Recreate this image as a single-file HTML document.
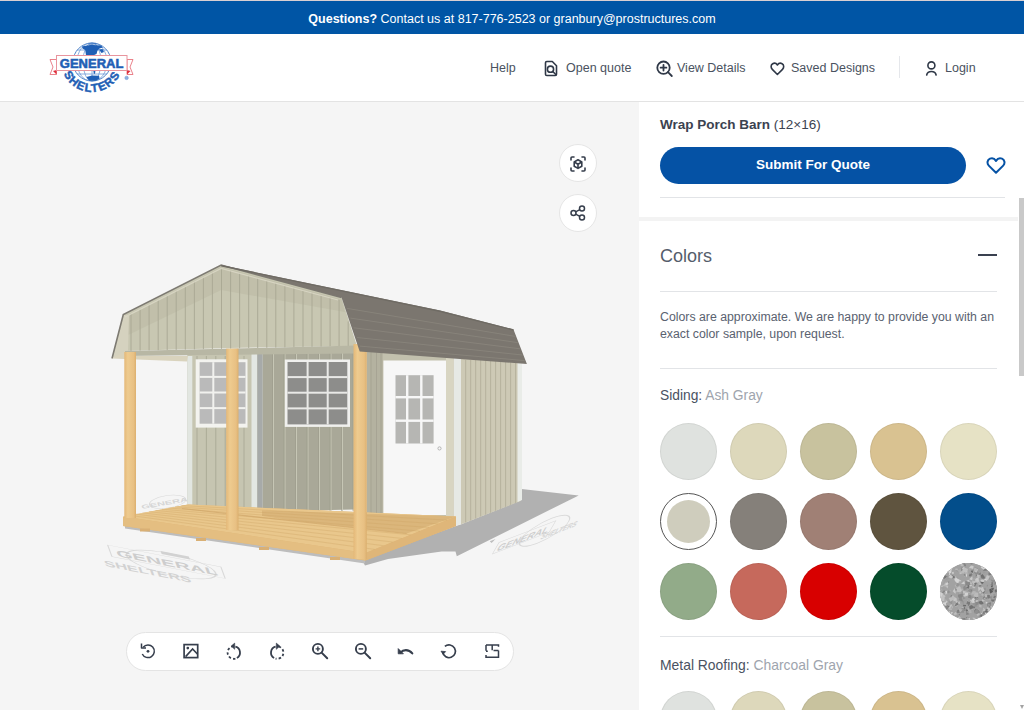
<!DOCTYPE html>
<html><head><meta charset="utf-8">
<style>
*{box-sizing:border-box;margin:0;padding:0}
html,body{width:1024px;height:710px;overflow:hidden;background:#fff;font-family:"Liberation Sans",sans-serif}
.top{position:absolute;left:0;top:0;width:1024px;height:34.5px;background:#0055a5;border-top:1px solid #d9cfd2;color:#fff;font-size:12.5px;text-align:center;line-height:36px}
.top b{font-weight:bold}
.hdr{position:absolute;z-index:2;left:0;top:34px;width:1024px;height:68px;background:#fff;border-bottom:1px solid #e3e3e3}
.nav{position:absolute;top:27px;font-size:12.5px;color:#4a5260;white-space:nowrap}
.viewer{position:absolute;left:0;top:101px;width:639px;height:609px;background:#f5f5f5}
.panel{position:absolute;left:639px;top:101px;width:385px;height:609px;background:#fff;overflow:hidden}
.t{position:absolute;white-space:nowrap}
.hr{position:absolute;height:1px;background:#e2e4e7}
.sw{position:absolute;width:57px;height:57px;border-radius:50%;box-shadow:0 0 0 1px rgba(0,0,0,0.06) inset}
.rb{position:absolute;width:38px;height:38px;border-radius:50%;background:#fff;border:1px solid #e6e6e6}
.bar{position:absolute;left:126px;top:530.5px;width:388px;height:39px;border-radius:19.5px;background:#fff;border:1px solid #e4e4e4}
svg.ic{position:absolute}
</style></head><body>
<div class="top"><b>Questions?</b> Contact us at 817-776-2523 or granbury@prostructures.com</div>
<div class="hdr">
<svg style="position:absolute;left:48px;top:6px" width="90" height="60" viewBox="48 40 90 60">
 <defs><clipPath id="gc"><circle cx="92" cy="62" r="19.5"/></clipPath></defs>
 <circle cx="92" cy="62" r="19" fill="#fff" stroke="#3d76c2" stroke-width="0.9"/>
 <g clip-path="url(#gc)" stroke="#6f9bd6" stroke-width="0.8" fill="none">
  <ellipse cx="92" cy="62" rx="9" ry="19.5"/><ellipse cx="92" cy="62" rx="15" ry="19.5"/>
  <line x1="72" y1="50" x2="112" y2="50"/><line x1="72" y1="74" x2="112" y2="74"/><line x1="92" y1="42" x2="92" y2="82"/>
 </g>
 <g clip-path="url(#gc)" fill="#1f5fb5">
  <path d="M82 46.5 C86 45 94 44.5 101 45.5 L103 47.5 L99.5 48.5 L97.5 50.5 L96.5 54 L93 55.5 L86 55.6 L85.2 50 L82.5 48.5 Z"/>
  <path d="M99 49.5 L102.5 49 L104 52 L101.5 53 Z"/><path d="M88 43.5 L96 43 L97 44.5 L89 45 Z" fill-opacity="0.6"/>
  <path d="M86.5 77 L92 75.6 L99 75.8 L99.5 78.5 L96 80.8 L89 80.8 Z"/><path d="M93.3 70.2 L95.5 70.2 L95 73.8 L93.8 73.8Z"/>
 </g>
 <path d="M50 59.5 L56.5 59.5 L56.5 74.5 L50 74.5 L53 67 Z" fill="#fff" stroke="#e8747e" stroke-width="0.9"/>
 <path d="M133 59.5 L127 59.5 L127 74.5 L133 74.5 L130 67 Z" fill="#fff" stroke="#e8747e" stroke-width="0.9"/>
 <path d="M53 71 L56.5 74.5 L56.5 70Z" fill="#e0303e"/><path d="M130.5 71 L127 74.5 L127 70Z" fill="#e0303e"/>
 <rect x="56.5" y="55.5" width="70.5" height="15" fill="#fff" stroke="#e8959e" stroke-width="1"/>
 <text x="91.6" y="67.8" text-anchor="middle" font-family="Liberation Sans" font-weight="bold" font-size="12.3" fill="#1f5fb5" stroke="#1f5fb5" stroke-width="0.55" textLength="63.5" lengthAdjust="spacingAndGlyphs">GENERAL</text>
 <path id="arc" d="M61 61 A31 31 0 0 0 123 61" fill="none"/>
 <text font-family="Liberation Sans" font-weight="bold" font-size="11.5" fill="#1f5fb5" stroke="#1f5fb5" stroke-width="0.5" letter-spacing="1.3"><textPath href="#arc" startOffset="50%" text-anchor="middle">SHELTERS</textPath></text>
 <circle cx="126.6" cy="77.9" r="1.7" fill="#8fb1e0" stroke="#6f9bd6" stroke-width="0.6"/>
</svg>
<div class="nav" style="left:490px">Help</div>
<svg class="ic" style="left:543px;top:26px" width="16" height="17" viewBox="0 0 16 17" fill="none" stroke="#2f3847" stroke-width="1.6" stroke-linejoin="round">
 <path d="M3.8 1.5 H9.3 L13.5 5.7 V14.2 Q13.5 15.5 12.2 15.5 H3.8 Q2.5 15.5 2.5 14.2 V2.8 Q2.5 1.5 3.8 1.5Z"/>
 <circle cx="7.5" cy="9.2" r="3.1"/><path d="M9.8 11.5 L13 14.7" stroke-linecap="round"/>
</svg>
<div class="nav" style="left:566px">Open quote</div>
<svg class="ic" style="left:655px;top:25px" width="20" height="20" viewBox="0 0 20 20" fill="none" stroke="#2f3847" stroke-width="1.8" stroke-linecap="round">
 <circle cx="8.5" cy="8.7" r="6.2"/><path d="M13 13.2 L16.8 17"/><path d="M8.5 5.8 V11.6 M5.6 8.7 H11.4"/>
</svg>
<div class="nav" style="left:677px">View Details</div>
<svg class="ic" style="left:769px;top:26px" width="17" height="17" viewBox="0 0 17 16" fill="none" stroke="#2f3847" stroke-width="1.6" stroke-linejoin="round">
 <path d="M8.4 14 L3.3 8.9 C1.6 7.2 1.7 4.3 3.7 3.2 C5.4 2.3 7.3 2.9 8.4 4.5 C9.5 2.9 11.4 2.3 13.1 3.2 C15.1 4.3 15.2 7.2 13.5 8.9 Z"/>
</svg>
<div class="nav" style="left:791px">Saved Designs</div>
<div style="position:absolute;left:899px;top:22px;width:1px;height:22px;background:#e5e7eb"></div>
<svg class="ic" style="left:924px;top:26px" width="15" height="17" viewBox="0 0 15 17" fill="none" stroke="#2f3847" stroke-width="1.6" stroke-linecap="round">
 <circle cx="7.4" cy="5.4" r="3.5"/><path d="M2.7 15 C3.2 12.6 5 11.5 7.4 11.5 C9.8 11.5 11.6 12.6 12.1 15"/>
</svg>
<div class="nav" style="left:945px">Login</div>
</div>
<div class="viewer">
<div class="rb" style="left:559px;top:43px"></div>
<svg class="ic" style="left:569px;top:54px" width="18" height="18" viewBox="0 0 18 18" fill="none" stroke="#353d4b" stroke-width="1.6" stroke-linecap="round" stroke-linejoin="round">
 <path d="M2 5 V3 C2 2.4 2.4 2 3 2 H5 M13 2 H15 C15.6 2 16 2.4 16 3 V5 M16 13 V15 C16 15.6 15.6 16 15 16 H13 M5 16 H3 C2.4 16 2 15.6 2 15 V13"/>
 <path d="M9 4.8 L12.8 7 V11.2 L9 13.4 L5.2 11.2 V7 Z M5.2 7 L9 9.2 L12.8 7 M9 9.2 V13.4"/>
</svg>
<div class="rb" style="left:559px;top:93px"></div>
<svg class="ic" style="left:569px;top:103px" width="18" height="18" viewBox="0 0 18 18" fill="none" stroke="#363e4c" stroke-width="1.5">
 <circle cx="4.5" cy="9" r="2.5"/><circle cx="13" cy="4.5" r="2.5"/><circle cx="13" cy="13.5" r="2.5"/>
 <path d="M6.7 7.8 L10.8 5.7 M6.7 10.2 L10.8 12.3"/>
</svg>
<div class="bar"></div>
<svg class="ic" style="left:139.1px;top:540.8px" width="18" height="18" viewBox="0 0 18 18" fill="none" stroke="#363e4c" stroke-width="1.5"><path d="M4.17 5.25 A6.3 6.3 0 1 1 3.29 11.96"/><path d="M2.5 1.6 V5.9 H7" stroke-linejoin="round"/><circle cx="9" cy="9.3" r="1.4" fill="#363e4c" stroke="none"/></svg>
<svg class="ic" style="left:181.8px;top:540.8px" width="18" height="18" viewBox="0 0 18 18" fill="none" stroke="#363e4c" stroke-width="1.5"><rect x="2.1" y="2.6" width="13.6" height="13" stroke-width="1.7"/><path d="M3.6 14.6 L10.6 7 L15.6 12.2" stroke-width="1.6"/><circle cx="5.8" cy="6.1" r="1.35" fill="#363e4c" stroke="none"/></svg>
<svg class="ic" style="left:224.9px;top:540.8px" width="18" height="18" viewBox="0 0 18 18" fill="none" stroke="#363e4c" stroke-width="1.5"><path d="M10.40 4.61 A6.2 6.2 0 0 1 11.90 15.97" stroke-width="1.8"/><path d="M10.40 16.59 A6.2 6.2 0 0 1 7.20 4.61" stroke-width="1.8" stroke-dasharray="2.4 2.1"/><path d="M6.2 4.1 L9.7 1.1 L9.7 7.3 Z" fill="#363e4c" stroke-width="0.6" stroke-linejoin="round"/></svg>
<svg class="ic" style="left:267.5px;top:540.8px" width="18" height="18" viewBox="0 0 18 18" fill="none" stroke="#363e4c" stroke-width="1.5"><path d="M6.10 15.97 A6.2 6.2 0 0 1 7.60 4.61" stroke-width="1.8"/><path d="M10.80 4.61 A6.2 6.2 0 0 1 7.60 16.59" stroke-width="1.8" stroke-dasharray="2.4 2.1"/><path d="M11.8 4.1 L8.3 1.1 L8.3 7.3 Z" fill="#363e4c" stroke-width="0.6" stroke-linejoin="round"/></svg>
<svg class="ic" style="left:310.6px;top:540.8px" width="18" height="18" viewBox="0 0 18 18" fill="none" stroke="#363e4c" stroke-width="1.5"><circle cx="6.9" cy="6.9" r="5" stroke-width="1.9"/><path d="M10.6 10.6 L16.2 16.2" stroke-width="2" stroke-linecap="round"/><path d="M6.9 4.6 V9.2 M4.6 6.9 H9.2" stroke-width="1.4"/></svg>
<svg class="ic" style="left:353.7px;top:540.8px" width="18" height="18" viewBox="0 0 18 18" fill="none" stroke="#363e4c" stroke-width="1.5"><circle cx="6.9" cy="6.9" r="5" stroke-width="1.9"/><path d="M10.6 10.6 L16.2 16.2" stroke-width="2" stroke-linecap="round"/><path d="M4.6 6.9 H9.2" stroke-width="1.5"/></svg>
<svg class="ic" style="left:396.3px;top:540.8px" width="18" height="18" viewBox="0 0 18 18" fill="none" stroke="#363e4c" stroke-width="1.5"><path d="M4.5 10.6 C7 7.6 12.5 6.8 16.3 11.4" stroke-width="2.1" stroke-linecap="round"/><path d="M2.2 6.6 L2.2 11.8 L7.4 11.8 Z" fill="#363e4c" stroke-width="0.8" stroke-linejoin="round"/></svg>
<svg class="ic" style="left:439.8px;top:540.8px" width="18" height="18" viewBox="0 0 18 18" fill="none" stroke="#363e4c" stroke-width="1.5"><path d="M4.89 4.40 A6.4 6.4 0 1 1 2.70 10.41" stroke-width="1.7"/><path d="M1.0 9.2 L3.2 12.2 L5.6 9.6 Z" fill="#353d4b" stroke-width="0.8" stroke-linejoin="round"/></svg>
<svg class="ic" style="left:482.5px;top:540.8px" width="18" height="18" viewBox="0 0 18 18" fill="none" stroke="#363e4c" stroke-width="1.5"><path d="M3 3 H15.5 V4.8 M15.5 8.6 V15.2 H3 V13 M3 3 V8.8 M15.5 8.6 H10.5 M9.2 3 V8.2 M3 9.3 H4.8" stroke-linecap="butt"/></svg>
<!--BARN--><svg style="position:absolute;left:0;top:0" width="639" height="609" viewBox="0 101 639 609">
<defs><linearGradient id="postg" x1="0" x2="1" y1="0" y2="0"><stop offset="0" stop-color="#e4b878"/><stop offset="0.3" stop-color="#eecb8f"/><stop offset="0.8" stop-color="#e8c083"/><stop offset="1" stop-color="#dbaf6e"/></linearGradient></defs>
<g fill="none" stroke="#d9d9d9" stroke-width="1.6">
<g transform="matrix(1.011,0.196,0.1435,0.385,168,566)"><ellipse cx="4" cy="-6" rx="44" ry="30" /><path d="M-56 -26 H56 V4 H-56 Z" stroke-width="1.2"/><path d="M-2 -38 H26 V-30 H-2Z" fill="#d2d2d2" stroke="none"/><text x="0" y="0" text-anchor="middle" font-family="Liberation Sans" font-weight="bold" font-size="24" fill="#cdcdcd" stroke="none" textLength="100" lengthAdjust="spacingAndGlyphs">GENERAL</text><text x="-24" y="34" text-anchor="middle" font-family="Liberation Sans" font-weight="bold" font-size="22" fill="#d2d2d2" stroke="none" textLength="86" lengthAdjust="spacingAndGlyphs">SHELTERS</text></g>
<g transform="matrix(0.71,-0.272,-0.3,0.52,522,541)"><ellipse cx="30" cy="-4" rx="34" ry="24" /><path d="M-40 -18 H40 V4 H-40 Z" stroke-width="1.2"/><path d="M-58 -30 l8 0 l-3 6z" fill="#bdbdbd" stroke="none"/><text x="0" y="2" text-anchor="middle" font-family="Liberation Sans" font-weight="bold" font-size="19" fill="#cdcdcd" stroke="none" textLength="72" lengthAdjust="spacingAndGlyphs">GENERAL</text><text x="56" y="14" text-anchor="middle" font-family="Liberation Sans" font-weight="bold" font-size="16" fill="#d4d4d4" stroke="none" textLength="50" lengthAdjust="spacingAndGlyphs">SHELTERS</text></g>
<g transform="matrix(0.6,-0.1,0.1,0.3,168,503)"><ellipse cx="0" cy="-4" rx="30" ry="20"/><text x="0" y="5" text-anchor="middle" font-family="Liberation Sans" font-weight="bold" font-size="18" fill="#d6d6d6" stroke="none">GENERAL</text></g>
</g>
<polygon points="521.6,489.0 578.7,495.4 456.8,556.3 455.5,551.5 441.6,551.5 388.0,559.0 365.0,565.5 362.0,560.0 456.0,526.0 460.7,524.6 520.6,500.5" fill="#b1b1b1" />
<polygon points="125.0,525.5 365.0,560.0 365.0,563.5 125.0,528.5" fill="#bdbdbd" />
<polygon points="460.7,358.0 520.6,362.0 520.6,501.0 460.7,524.6" fill="#cdc9b5" />
<line x1="465.7" y1="360" x2="465.7" y2="522.6" stroke="#b3af9a" stroke-width="0.9"/>
<line x1="470.7" y1="360" x2="470.7" y2="520.7" stroke="#b3af9a" stroke-width="0.9"/>
<line x1="475.7" y1="360" x2="475.7" y2="518.7" stroke="#b3af9a" stroke-width="0.9"/>
<line x1="480.7" y1="360" x2="480.7" y2="516.7" stroke="#b3af9a" stroke-width="0.9"/>
<line x1="485.7" y1="360" x2="485.7" y2="514.8" stroke="#b3af9a" stroke-width="0.9"/>
<line x1="490.6" y1="360" x2="490.6" y2="512.8" stroke="#b3af9a" stroke-width="0.9"/>
<line x1="495.6" y1="360" x2="495.6" y2="510.8" stroke="#b3af9a" stroke-width="0.9"/>
<line x1="500.6" y1="360" x2="500.6" y2="508.9" stroke="#b3af9a" stroke-width="0.9"/>
<line x1="505.6" y1="360" x2="505.6" y2="506.9" stroke="#b3af9a" stroke-width="0.9"/>
<line x1="510.6" y1="360" x2="510.6" y2="504.9" stroke="#b3af9a" stroke-width="0.9"/>
<line x1="515.6" y1="360" x2="515.6" y2="503.0" stroke="#b3af9a" stroke-width="0.9"/>
<polygon points="517.5,362.0 522.0,362.0 522.0,500.0 517.5,502.0" fill="#e9ece8" />
<polygon points="453.6,356.0 460.7,356.0 460.7,524.6 453.6,526.0" fill="#e6e9e5" />
<polygon points="366.8,344.0 453.6,350.0 453.6,526.0 366.8,525.0" fill="#c2c0ad" />
<polygon points="366.8,344.0 382.8,345.0 382.8,525.0 366.8,525.0" fill="#b4b2a0" />
<line x1="371" y1="350" x2="371" y2="525" stroke="#a3a190" stroke-width="0.8"/>
<line x1="376.5" y1="350" x2="376.5" y2="525" stroke="#a3a190" stroke-width="0.8"/>
<line x1="381" y1="350" x2="381" y2="525" stroke="#a3a190" stroke-width="0.8"/>
<polygon points="446.0,350.0 453.6,350.0 453.6,526.0 446.0,526.0" fill="#d8d5c2" />
<polygon points="383.4,360.5 446.0,360.5 446.0,515.0 383.4,515.0" fill="#f7f7f7" />
<rect x="395.5" y="375.2" width="38.1" height="68.3" fill="#b6b6b3"/>
<rect x="406.0" y="375.2" width="2.4" height="68.3" fill="#f7f7f7"/>
<rect x="420.1" y="375.2" width="2.4" height="68.3" fill="#f7f7f7"/>
<rect x="395.5" y="396.0" width="38.1" height="2.4" fill="#f7f7f7"/>
<rect x="395.5" y="419.5" width="38.1" height="2.4" fill="#f7f7f7"/>
<circle cx="439.5" cy="448.4" r="1.6" fill="none" stroke="#a6a6a6" stroke-width="0.8"/>
<polygon points="262.6,352.0 354.0,352.0 354.0,509.6 262.6,511.4" fill="#a9a898" />
<line x1="273.5" y1="352" x2="273.5" y2="511" stroke="#cac9b8" stroke-width="0.9"/>
<line x1="272.5" y1="352" x2="272.5" y2="511" stroke="#9c9b8b" stroke-width="0.6"/>
<line x1="285.0" y1="352" x2="285.0" y2="511" stroke="#cac9b8" stroke-width="0.9"/>
<line x1="284.0" y1="352" x2="284.0" y2="511" stroke="#9c9b8b" stroke-width="0.6"/>
<line x1="296.5" y1="352" x2="296.5" y2="511" stroke="#cac9b8" stroke-width="0.9"/>
<line x1="295.5" y1="352" x2="295.5" y2="511" stroke="#9c9b8b" stroke-width="0.6"/>
<line x1="308.0" y1="352" x2="308.0" y2="511" stroke="#cac9b8" stroke-width="0.9"/>
<line x1="307.0" y1="352" x2="307.0" y2="511" stroke="#9c9b8b" stroke-width="0.6"/>
<line x1="319.5" y1="352" x2="319.5" y2="511" stroke="#cac9b8" stroke-width="0.9"/>
<line x1="318.5" y1="352" x2="318.5" y2="511" stroke="#9c9b8b" stroke-width="0.6"/>
<line x1="331.0" y1="352" x2="331.0" y2="511" stroke="#cac9b8" stroke-width="0.9"/>
<line x1="330.0" y1="352" x2="330.0" y2="511" stroke="#9c9b8b" stroke-width="0.6"/>
<line x1="342.5" y1="352" x2="342.5" y2="511" stroke="#cac9b8" stroke-width="0.9"/>
<line x1="341.5" y1="352" x2="341.5" y2="511" stroke="#9c9b8b" stroke-width="0.6"/>
<line x1="354.0" y1="352" x2="354.0" y2="511" stroke="#cac9b8" stroke-width="0.9"/>
<line x1="353.0" y1="352" x2="353.0" y2="511" stroke="#9c9b8b" stroke-width="0.6"/>
<rect x="284.8" y="359.5" width="65.2" height="67.4" fill="#f0f0ee"/>
<rect x="287.5" y="362" width="59.8" height="62.4" fill="#8d8d8b"/>
<rect x="306.6" y="362" width="2" height="62.4" fill="#e9e9e7"/>
<rect x="326.7" y="362" width="2" height="62.4" fill="#e9e9e7"/>
<rect x="287.5" y="376.1" width="59.8" height="2" fill="#e9e9e7"/>
<rect x="287.5" y="391.7" width="59.8" height="2" fill="#e9e9e7"/>
<rect x="287.5" y="407.4" width="59.8" height="2" fill="#e9e9e7"/>
<polygon points="187.3,354.0 262.6,352.0 262.6,511.4 187.3,504.4" fill="#c6c5b1" />
<line x1="197.0" y1="356" x2="197.0" y2="505.3" stroke="#a9a895" stroke-width="0.9"/>
<line x1="206.4" y1="356" x2="206.4" y2="506.2" stroke="#a9a895" stroke-width="0.9"/>
<line x1="215.8" y1="356" x2="215.8" y2="507.1" stroke="#a9a895" stroke-width="0.9"/>
<line x1="225.2" y1="356" x2="225.2" y2="507.9" stroke="#a9a895" stroke-width="0.9"/>
<line x1="234.6" y1="356" x2="234.6" y2="508.8" stroke="#a9a895" stroke-width="0.9"/>
<line x1="244.0" y1="356" x2="244.0" y2="509.7" stroke="#a9a895" stroke-width="0.9"/>
<line x1="253.4" y1="356" x2="253.4" y2="510.5" stroke="#a9a895" stroke-width="0.9"/>
<polygon points="187.3,356.0 192.3,356.0 192.3,505.0 187.3,504.4" fill="#e2e6e1" />
<polygon points="251.5,353.0 257.3,353.0 257.3,511.0 251.5,511.0" fill="#e3e7e3" />
<polygon points="257.3,353.0 262.6,353.0 262.6,511.4 257.3,511.0" fill="#a7aaa9" />
<rect x="195.7" y="359.3" width="51.8" height="68.3" fill="#f3f3ef"/>
<rect x="199.6" y="362.2" width="45.9" height="61.5" fill="#bababa"/>
<rect x="212.3" y="362.2" width="2" height="61.5" fill="#f1f1ee"/>
<rect x="227.9" y="362.2" width="2" height="61.5" fill="#f1f1ee"/>
<rect x="199.6" y="375.9" width="45.9" height="2" fill="#f1f1ee"/>
<rect x="199.6" y="391.5" width="45.9" height="2" fill="#f1f1ee"/>
<rect x="199.6" y="407.1" width="45.9" height="2" fill="#f1f1ee"/>
<polygon points="123.0,517.0 188.0,504.4 456.0,516.5 456.0,526.0 365.5,560.5 123.0,526.0" fill="#dfb679" />
<polygon points="123.0,516.5 188.0,504.4 456.0,516.5 365.5,553.0" fill="#e9c78c" />
<polygon points="262.0,510.5 456.0,516.5 406.6,533.5 307.0,522.5 262.0,516.0" fill="#dbb67b" />
<polyline points="182,508.5 307,522.5 406.6,533.5" fill="none" stroke="#d3ab6f" stroke-width="1.2" opacity="0.8"/>
<polygon points="123.0,516.5 365.5,553.0 365.5,560.5 123.0,526.0" fill="#e4be81" />
<polygon points="365.5,553.0 456.0,516.5 456.0,526.0 365.5,560.5" fill="#dfb679" />
<line x1="129.5" y1="515.3" x2="374.6" y2="549.4" stroke="#cfa565" stroke-width="0.6" opacity="0.6"/>
<line x1="136.0" y1="514.1" x2="383.6" y2="545.7" stroke="#cfa565" stroke-width="0.6" opacity="0.6"/>
<line x1="142.5" y1="512.9" x2="392.6" y2="542.0" stroke="#cfa565" stroke-width="0.6" opacity="0.6"/>
<line x1="149.0" y1="511.7" x2="401.7" y2="538.4" stroke="#cfa565" stroke-width="0.6" opacity="0.6"/>
<line x1="155.5" y1="510.4" x2="410.8" y2="534.8" stroke="#cfa565" stroke-width="0.6" opacity="0.6"/>
<line x1="162.0" y1="509.2" x2="419.8" y2="531.1" stroke="#cfa565" stroke-width="0.6" opacity="0.6"/>
<line x1="168.5" y1="508.0" x2="428.9" y2="527.5" stroke="#cfa565" stroke-width="0.6" opacity="0.6"/>
<line x1="175.0" y1="506.8" x2="437.9" y2="523.8" stroke="#cfa565" stroke-width="0.6" opacity="0.6"/>
<line x1="181.5" y1="505.6" x2="446.9" y2="520.1" stroke="#cfa565" stroke-width="0.6" opacity="0.6"/>
<rect x="140" y="528.5" width="10" height="3" fill="#d9b075"/>
<rect x="196" y="538" width="10" height="3" fill="#d9b075"/>
<rect x="259" y="547" width="10" height="3" fill="#d9b075"/>
<rect x="330" y="557" width="10" height="3" fill="#d9b075"/>
<polygon points="221.2,265.1 341.5,297.6 357.0,346.0 230.0,348.0 125.0,351.0 112.0,358.5 123.3,314.6" fill="#c8c7b2" />
<polygon points="221.2,267.0 341.5,299.5 345.0,312.0 221.2,290.0 124.0,337.0 124.5,318.0" fill="#bdbca7" opacity="0.7"/>
<line x1="131.0" y1="313.7" x2="131.0" y2="350.9" stroke="#a8a793" stroke-width="0.9"/>
<line x1="140.1" y1="309.1" x2="140.1" y2="350.7" stroke="#a8a793" stroke-width="0.9"/>
<line x1="149.1" y1="304.6" x2="149.1" y2="350.5" stroke="#a8a793" stroke-width="0.9"/>
<line x1="158.2" y1="300.0" x2="158.2" y2="350.3" stroke="#a8a793" stroke-width="0.9"/>
<line x1="167.2" y1="295.4" x2="167.2" y2="350.1" stroke="#a8a793" stroke-width="0.9"/>
<line x1="176.2" y1="290.8" x2="176.2" y2="349.9" stroke="#a8a793" stroke-width="0.9"/>
<line x1="185.3" y1="286.3" x2="185.3" y2="349.7" stroke="#a8a793" stroke-width="0.9"/>
<line x1="194.4" y1="281.7" x2="194.4" y2="349.5" stroke="#a8a793" stroke-width="0.9"/>
<line x1="203.4" y1="277.1" x2="203.4" y2="349.3" stroke="#a8a793" stroke-width="0.9"/>
<line x1="212.4" y1="272.5" x2="212.4" y2="349.1" stroke="#a8a793" stroke-width="0.9"/>
<line x1="221.5" y1="268.2" x2="221.5" y2="348.9" stroke="#a8a793" stroke-width="0.9"/>
<line x1="230.6" y1="270.6" x2="230.6" y2="348.7" stroke="#a8a793" stroke-width="0.9"/>
<line x1="239.6" y1="273.1" x2="239.6" y2="348.5" stroke="#a8a793" stroke-width="0.9"/>
<line x1="248.7" y1="275.5" x2="248.7" y2="348.3" stroke="#a8a793" stroke-width="0.9"/>
<line x1="257.7" y1="278.0" x2="257.7" y2="348.1" stroke="#a8a793" stroke-width="0.9"/>
<line x1="266.8" y1="280.4" x2="266.8" y2="347.9" stroke="#a8a793" stroke-width="0.9"/>
<line x1="275.8" y1="282.9" x2="275.8" y2="347.8" stroke="#a8a793" stroke-width="0.9"/>
<line x1="284.9" y1="285.3" x2="284.9" y2="347.6" stroke="#a8a793" stroke-width="0.9"/>
<line x1="293.9" y1="287.7" x2="293.9" y2="347.4" stroke="#a8a793" stroke-width="0.9"/>
<line x1="303.0" y1="290.2" x2="303.0" y2="347.2" stroke="#a8a793" stroke-width="0.9"/>
<line x1="312.0" y1="292.6" x2="312.0" y2="347.0" stroke="#a8a793" stroke-width="0.9"/>
<line x1="321.1" y1="295.1" x2="321.1" y2="346.8" stroke="#a8a793" stroke-width="0.9"/>
<line x1="330.1" y1="297.5" x2="330.1" y2="346.6" stroke="#a8a793" stroke-width="0.9"/>
<line x1="339.1" y1="300.0" x2="339.1" y2="346.4" stroke="#a8a793" stroke-width="0.9"/>
<line x1="348.2" y1="321.5" x2="348.2" y2="346.2" stroke="#a8a793" stroke-width="0.9"/>
<polygon points="123.3,314.6 129.0,316.0 128.0,352.0 112.0,358.5" fill="#d5d2bf" />
<polyline points="112,358.5 123.3,314.6 221.2,265.1 341.5,297.6" fill="none" stroke="#7d7a72" stroke-width="1.6"/>
<polyline points="125,317 221.2,268.5 338,300" fill="none" stroke="#dcdac8" stroke-width="1.2" opacity="0.8"/>
<polygon points="125.0,351.0 357.0,345.5 357.0,353.5 125.0,356.0" fill="#b8b7a4" />
<polygon points="112.0,358.5 125.0,351.0 125.0,356.0 188.0,356.0 187.0,361.5" fill="#d9d3bd" />
<rect x="124.3" y="352" width="11.700000000000003" height="166" fill="url(#postg)"/>
<rect x="226.2" y="348.6" width="12.300000000000011" height="181.39999999999998" fill="url(#postg)"/>
<rect x="353.5" y="344" width="13.300000000000011" height="215" fill="url(#postg)"/>
<polygon points="221.2,265.1 440.0,310.5 513.5,329.5 526.9,364.0 359.7,351.5 341.5,297.6" fill="#7b766f" />
<polyline points="221.2,265.8 440,311.2 513.5,330" fill="none" stroke="#6f6b64" stroke-width="1.4"/>
<line x1="347.1" y1="308.4" x2="515.2" y2="336.4" stroke="#89847c" stroke-width="0.9"/>
<line x1="350.4" y1="318.1" x2="517.6" y2="342.6" stroke="#89847c" stroke-width="0.9"/>
<line x1="353.7" y1="327.8" x2="520.0" y2="348.8" stroke="#89847c" stroke-width="0.9"/>
<line x1="357.0" y1="337.5" x2="522.4" y2="355.0" stroke="#89847c" stroke-width="0.9"/>
<line x1="359.9" y1="346.1" x2="524.6" y2="360.6" stroke="#89847c" stroke-width="0.9"/>
</svg><!--/BARN-->
</div>
<div class="panel">
<div class="t" style="left:21px;top:16px;font-size:13.5px;color:#3b4250"><b>Wrap Porch Barn</b> (12×16)</div>
<div style="position:absolute;left:21px;top:46px;width:306px;height:37px;border-radius:19px;background:#0552a5"></div>
<div class="t" style="left:21px;top:45px;width:306px;text-align:center;line-height:37px;font-size:13.5px;font-weight:bold;color:#fff">Submit For Quote</div>
<svg class="ic" style="left:347px;top:55px" width="20" height="19" viewBox="0 0 20 19" fill="none" stroke="#0552a5" stroke-width="2" stroke-linejoin="round">
 <path d="M10 16.8 L2.8 9.6 C0.7 7.5 1.2 3.8 4 2.6 C6.4 1.6 8.7 2.8 10 4.9 C11.3 2.8 13.6 1.6 16 2.6 C18.8 3.8 19.3 7.5 17.2 9.6 Z"/>
</svg>
<div class="hr" style="left:21px;top:96px;width:345px"></div>
<div style="position:absolute;left:0;top:116px;width:379px;height:4px;background:#f3f3f3"></div>
<div style="position:absolute;left:380px;top:97px;width:5px;height:178px;background:#c9c9c9"></div>
<div class="t" style="left:21px;top:145px;font-size:18px;color:#555d6b">Colors</div>
<div style="position:absolute;left:339px;top:153px;width:19px;height:2px;background:#3a4150"></div>
<div class="hr" style="left:21px;top:190px;width:337px"></div>
<div class="t" style="left:21px;top:208px;font-size:12.3px;line-height:17px;color:#5a6270">Colors are approximate. We are happy to provide you with an<br>exact color sample, upon request.</div>
<div class="hr" style="left:21px;top:267px;width:337px"></div>
<div class="t" style="left:21px;top:287px;font-size:13.8px;color:#4a5262">Siding: <span style="color:#9ea4ad">Ash Gray</span></div>
<div class="sw" style="left:21px;top:322px;background:#dfe2df"></div>
<div class="sw" style="left:91px;top:322px;background:#ddd8bb"></div>
<div class="sw" style="left:161px;top:322px;background:#c8c29e"></div>
<div class="sw" style="left:231px;top:322px;background:#d9c291"></div>
<div class="sw" style="left:301px;top:322px;background:#e6e2c5"></div>
<div style="position:absolute;left:21px;top:392px;width:57px;height:57px;border-radius:50%;border:1px solid #555"><div style="position:absolute;left:6px;top:6px;width:43px;height:43px;border-radius:50%;background:#cfcdbd"></div></div>
<div class="sw" style="left:91px;top:392px;background:#85807a"></div>
<div class="sw" style="left:161px;top:392px;background:#a08075"></div>
<div class="sw" style="left:231px;top:392px;background:#5f543f"></div>
<div class="sw" style="left:301px;top:392px;background:#034e8b"></div>
<div class="sw" style="left:21px;top:462px;background:#92ab89"></div>
<div class="sw" style="left:91px;top:462px;background:#c6695c"></div>
<div class="sw" style="left:161px;top:462px;background:#d80000"></div>
<div class="sw" style="left:231px;top:462px;background:#054c2b"></div>
<div class="sw" style="left:301px;top:462px;background:#a9a9a9;overflow:hidden"><svg width="57" height="57" viewBox="0 0 57 57" style="position:absolute;left:0;top:0"><rect width="57" height="57" fill="#a2a2a2"/><polygon points="18.0,5.0 18.2,8.9 15.9,8.0" fill="rgb(155,155,155)"/><polygon points="0.5,30.0 3.0,29.3 4.8,31.9 2.2,34.4 -0.0,34.1" fill="rgb(186,186,186)"/><polygon points="33.8,9.5 32.6,10.6 31.6,9.9 32.3,8.6 34.0,8.6" fill="rgb(199,199,199)"/><polygon points="29.8,18.2 28.5,20.3 27.3,19.8 26.5,17.7 28.7,16.8" fill="rgb(202,202,202)"/><polygon points="29.5,46.1 28.5,47.9 27.2,45.5" fill="rgb(204,204,204)"/><polygon points="21.0,56.1 19.0,56.7 17.1,55.3 18.3,54.0 21.0,54.4" fill="rgb(197,197,197)"/><polygon points="24.9,21.2 21.0,20.7 24.3,18.0" fill="rgb(206,206,206)"/><polygon points="23.0,31.1 22.7,33.9 19.3,35.8 17.8,32.9 19.0,30.6" fill="rgb(135,135,135)"/><polygon points="9.4,59.2 8.7,57.1 10.9,58.0" fill="rgb(118,118,118)"/><polygon points="38.1,58.7 35.3,57.8 35.3,55.6 37.7,54.9" fill="rgb(149,149,149)"/><polygon points="8.8,56.3 11.2,54.1 11.9,55.8 11.4,57.0 9.3,57.3" fill="rgb(194,194,194)"/><polygon points="48.7,56.4 48.8,59.9 46.0,58.8" fill="rgb(122,122,122)"/><polygon points="41.8,56.8 41.1,57.6 39.4,57.5 38.4,55.0 41.1,54.8" fill="rgb(185,185,185)"/><polygon points="2.9,22.7 6.0,19.1 5.9,23.7" fill="rgb(185,185,185)"/><polygon points="8.5,58.3 8.6,59.8 7.2,59.5 6.8,58.5 6.8,57.4" fill="rgb(213,213,213)"/><polygon points="57.4,24.3 53.2,25.8 54.0,21.6" fill="rgb(157,157,157)"/><polygon points="40.1,48.7 36.8,49.3 36.2,47.1 37.8,46.4 39.8,47.2" fill="rgb(213,213,213)"/><polygon points="32.7,45.9 32.2,47.0 30.6,46.8 31.0,45.2 33.0,45.2" fill="rgb(194,194,194)"/><polygon points="28.9,44.8 31.0,47.3 26.9,48.3" fill="rgb(176,176,176)"/><polygon points="25.4,3.4 23.3,1.5 26.0,1.6" fill="rgb(121,121,121)"/><polygon points="45.5,4.1 42.6,6.1 42.2,2.2" fill="rgb(125,125,125)"/><polygon points="17.3,27.8 15.7,25.5 20.6,23.8 20.5,26.3" fill="rgb(199,199,199)"/><polygon points="44.5,46.2 46.4,49.1 44.2,49.8 42.3,50.1 42.7,46.9" fill="rgb(190,190,190)"/><polygon points="2.0,50.7 3.7,49.4 4.2,50.8" fill="rgb(157,157,157)"/><polygon points="-0.5,10.4 1.5,9.0 3.0,11.2 1.3,11.4" fill="rgb(192,192,192)"/><polygon points="25.6,55.7 26.0,54.2 28.0,53.7 28.5,55.1 26.9,56.4" fill="rgb(130,130,130)"/><polygon points="1.2,38.1 -3.8,36.8 -2.5,34.6 0.7,34.6" fill="rgb(115,115,115)"/><polygon points="13.8,60.0 12.0,56.8 13.5,54.8 16.4,54.9 16.7,58.4" fill="rgb(110,110,110)"/><polygon points="21.1,-0.1 23.1,0.1 22.9,1.7 21.3,1.4" fill="rgb(198,198,198)"/><polygon points="38.1,5.3 37.0,8.2 35.1,9.2 32.9,6.2 35.5,4.3" fill="rgb(150,150,150)"/><polygon points="-0.9,7.0 -1.1,4.8 1.3,6.2" fill="rgb(212,212,212)"/><polygon points="4.2,31.9 1.8,29.7 4.2,27.1 5.7,30.1" fill="rgb(135,135,135)"/><polygon points="34.8,38.3 35.2,36.4 36.8,37.2" fill="rgb(193,193,193)"/><polygon points="26.2,42.2 27.0,39.4 28.9,41.4 28.3,43.1" fill="rgb(133,133,133)"/><polygon points="54.9,56.0 52.6,55.4 54.5,53.4" fill="rgb(173,173,173)"/><polygon points="53.8,27.5 52.4,28.6 52.1,27.2" fill="rgb(120,120,120)"/><polygon points="51.3,5.9 50.5,7.3 47.4,5.8 47.7,2.7 50.6,3.6" fill="rgb(198,198,198)"/><polygon points="54.0,14.7 54.0,13.2 55.1,11.8 56.6,12.9 56.0,13.7" fill="rgb(188,188,188)"/><polygon points="52.7,29.2 50.1,30.4 49.2,26.5 51.0,25.4 53.2,26.7" fill="rgb(92,92,92)"/><polygon points="8.7,54.2 11.0,51.3 11.9,54.0" fill="rgb(140,140,140)"/><polygon points="20.4,46.0 21.6,48.0 19.7,48.0" fill="rgb(122,122,122)"/><polygon points="41.2,32.0 37.8,31.1 39.6,27.4" fill="rgb(158,158,158)"/><polygon points="39.1,53.6 41.2,50.8 42.6,51.5 42.3,53.7 41.4,55.1" fill="rgb(111,111,111)"/><polygon points="29.0,0.2 34.1,-0.2 31.8,2.7" fill="rgb(156,156,156)"/><polygon points="29.7,31.8 30.6,34.9 28.1,34.4" fill="rgb(120,120,120)"/><polygon points="31.4,1.5 29.7,-0.5 30.5,-2.0 32.8,-0.6 32.9,0.2" fill="rgb(131,131,131)"/><polygon points="-1.8,18.0 -3.4,14.9 -0.1,13.4" fill="rgb(211,211,211)"/><polygon points="11.5,12.6 9.8,12.8 7.8,11.9 8.9,10.4 10.6,10.0" fill="rgb(125,125,125)"/><polygon points="54.2,16.7 56.0,17.5 55.6,18.8 54.6,19.2 53.1,17.8" fill="rgb(148,148,148)"/><polygon points="21.2,49.4 18.5,50.1 17.2,47.0 21.1,45.9" fill="rgb(120,120,120)"/><polygon points="20.2,29.2 19.1,25.5 23.5,26.0" fill="rgb(197,197,197)"/><polygon points="18.1,40.4 18.1,43.3 14.8,44.0 13.9,40.7 16.5,40.5" fill="rgb(180,180,180)"/><polygon points="16.1,41.4 16.2,39.3 18.0,39.8" fill="rgb(184,184,184)"/><polygon points="1.3,31.3 1.1,32.3 -1.3,32.9 -0.9,30.8" fill="rgb(195,195,195)"/><polygon points="30.2,47.2 29.2,44.4 31.0,43.3 33.8,45.2" fill="rgb(142,142,142)"/><polygon points="20.6,57.5 23.3,58.0 21.1,59.7" fill="rgb(173,173,173)"/><polygon points="13.5,2.7 10.9,2.8 10.6,-0.6 11.9,-1.2 14.0,1.3" fill="rgb(107,107,107)"/><polygon points="0.1,58.5 1.3,57.9 1.7,59.1 1.0,60.3 -0.1,59.2" fill="rgb(205,205,205)"/><polygon points="30.5,38.2 31.6,35.8 33.0,37.1" fill="rgb(127,127,127)"/><polygon points="49.2,60.3 50.4,57.5 51.9,58.9" fill="rgb(141,141,141)"/><polygon points="6.9,1.9 5.4,2.0 4.7,0.7 6.7,0.6" fill="rgb(198,198,198)"/><polygon points="4.4,58.1 2.7,55.3 7.5,52.7 8.6,57.2" fill="rgb(175,175,175)"/><polygon points="10.0,12.3 7.4,12.4 7.0,11.1 9.8,9.5 10.7,11.1" fill="rgb(209,209,209)"/><polygon points="47.7,44.4 50.7,43.6 52.1,45.8 48.9,47.0" fill="rgb(144,144,144)"/><polygon points="46.6,23.2 47.1,21.7 48.3,22.1 47.8,23.8" fill="rgb(146,146,146)"/><polygon points="55.0,36.5 52.8,39.7 50.6,36.6" fill="rgb(115,115,115)"/><polygon points="50.0,33.9 50.0,36.1 47.7,35.6 47.7,34.2" fill="rgb(125,125,125)"/><polygon points="7.9,10.7 6.0,7.9 7.6,5.0 11.6,7.6 11.1,10.0" fill="rgb(214,214,214)"/><polygon points="51.8,43.0 50.0,44.6 48.4,43.6 49.4,41.2" fill="rgb(200,200,200)"/><polygon points="-2.8,-0.7 -1.7,-1.2 -1.0,0.3 -1.2,1.3 -3.0,0.8" fill="rgb(206,206,206)"/><polygon points="18.0,7.3 14.9,6.8 15.4,5.4 17.7,5.6" fill="rgb(183,183,183)"/><polygon points="45.7,52.5 46.1,50.8 48.5,50.4 49.7,52.8 49.0,54.7" fill="rgb(215,215,215)"/><polygon points="54.7,5.6 56.3,5.6 56.9,6.6 54.8,8.2 54.1,7.2" fill="rgb(129,129,129)"/><polygon points="43.0,26.7 42.1,24.1 44.5,25.5" fill="rgb(215,215,215)"/><polygon points="23.2,48.1 22.7,46.2 24.7,43.6 25.9,46.9" fill="rgb(115,115,115)"/><polygon points="53.5,17.8 52.7,19.1 51.2,18.9 49.8,18.5 51.0,16.3" fill="rgb(147,147,147)"/><polygon points="52.3,6.1 54.3,6.7 53.6,8.0" fill="rgb(184,184,184)"/><polygon points="2.7,48.0 3.2,51.9 -2.1,49.6" fill="rgb(111,111,111)"/><polygon points="6.8,1.9 4.4,1.9 2.2,-0.3 3.7,-1.8 6.2,-1.6" fill="rgb(153,153,153)"/><polygon points="43.3,34.1 46.3,33.0 46.6,35.9 43.9,35.8" fill="rgb(110,110,110)"/><polygon points="26.1,30.0 23.7,30.8 23.9,28.7" fill="rgb(166,166,166)"/><polygon points="48.5,56.0 46.1,55.4 48.3,53.8" fill="rgb(156,156,156)"/><polygon points="53.9,43.3 52.1,45.2 50.5,44.6 51.0,42.5 53.4,41.6" fill="rgb(191,191,191)"/><polygon points="32.8,28.0 35.9,28.2 34.4,31.5 30.9,31.6" fill="rgb(182,182,182)"/><polygon points="17.0,38.1 18.4,41.8 14.4,43.4" fill="rgb(121,121,121)"/><polygon points="57.4,2.7 58.3,5.2 55.5,4.9" fill="rgb(129,129,129)"/><polygon points="23.8,45.8 23.8,48.3 21.6,47.9 20.6,44.5 23.0,43.9" fill="rgb(194,194,194)"/><polygon points="7.6,4.8 10.8,4.5 10.0,6.7 7.9,6.8" fill="rgb(213,213,213)"/><polygon points="38.5,48.7 39.8,52.2 37.9,53.2 35.3,50.0" fill="rgb(186,186,186)"/><polygon points="25.1,8.8 28.2,9.9 25.6,12.6" fill="rgb(187,187,187)"/><polygon points="57.7,20.4 57.5,18.5 59.1,19.0 58.9,20.2" fill="rgb(146,146,146)"/><polygon points="27.4,5.8 27.4,9.7 23.9,7.5" fill="rgb(200,200,200)"/><polygon points="57.3,45.4 57.3,43.4 59.7,43.0 61.1,45.0" fill="rgb(195,195,195)"/><polygon points="17.3,28.3 16.3,28.9 14.7,28.0 15.2,25.3 17.6,26.2" fill="rgb(142,142,142)"/><polygon points="55.2,37.2 57.5,37.0 56.4,39.4" fill="rgb(185,185,185)"/><polygon points="53.4,33.6 51.0,31.7 52.9,29.3 54.5,30.6" fill="rgb(168,168,168)"/><polygon points="2.0,27.8 0.6,26.3 1.3,25.0 2.7,26.5" fill="rgb(173,173,173)"/><polygon points="57.7,38.6 60.5,38.3 60.4,40.4 58.0,40.1" fill="rgb(193,193,193)"/><polygon points="22.5,6.7 22.5,5.2 23.4,4.6 24.8,5.5 24.3,6.9" fill="rgb(171,171,171)"/><polygon points="51.4,17.8 52.7,19.2 50.6,20.6 49.6,19.2" fill="rgb(147,147,147)"/><polygon points="15.2,-2.8 17.6,-2.4 17.4,-0.6 15.2,-0.6" fill="rgb(148,148,148)"/><polygon points="38.1,23.8 41.5,24.9 38.4,28.8" fill="rgb(199,199,199)"/><polygon points="40.8,52.0 41.1,49.7 42.3,50.6" fill="rgb(206,206,206)"/><polygon points="39.2,23.6 39.7,21.7 40.6,21.8 41.4,22.7 40.9,23.3" fill="rgb(105,105,105)"/><polygon points="10.5,3.4 12.5,4.8 11.3,7.5 9.2,5.2" fill="rgb(215,215,215)"/><polygon points="27.4,37.4 31.2,40.1 27.3,40.8" fill="rgb(211,211,211)"/><polygon points="-0.7,21.6 0.4,18.1 3.8,19.3 2.1,22.8" fill="rgb(167,167,167)"/><polygon points="13.5,38.3 13.0,34.9 14.5,34.0 17.0,35.7 16.4,37.8" fill="rgb(198,198,198)"/><polygon points="0.1,13.4 -0.8,14.8 -3.5,15.8 -4.2,14.4 -1.8,12.2" fill="rgb(136,136,136)"/><polygon points="32.4,26.5 31.9,28.9 30.6,28.9 29.1,26.8 30.8,26.4" fill="rgb(127,127,127)"/><polygon points="21.8,30.9 21.2,29.9 22.4,28.5 23.5,29.2 23.3,31.3" fill="rgb(152,152,152)"/><polygon points="51.7,22.1 49.6,20.7 51.1,18.3" fill="rgb(144,144,144)"/><polygon points="55.0,13.6 55.3,15.0 54.6,16.0 53.6,15.3" fill="rgb(173,173,173)"/><polygon points="55.3,52.2 56.0,52.5 56.6,53.5 55.5,54.7 54.6,54.4" fill="rgb(128,128,128)"/><polygon points="1.4,13.2 1.6,15.1 -0.6,15.6 -0.8,14.0 0.2,11.5" fill="rgb(199,199,199)"/><polygon points="33.4,45.1 33.1,43.5 35.4,43.4 34.7,45.3" fill="rgb(117,117,117)"/><polygon points="3.6,36.7 1.1,37.0 1.2,35.2 2.4,33.7 4.4,35.0" fill="rgb(194,194,194)"/><polygon points="-0.0,42.7 1.4,40.2 2.7,42.7" fill="rgb(115,115,115)"/><polygon points="18.5,54.0 17.6,54.3 16.4,53.5 16.6,52.3 18.9,52.3" fill="rgb(156,156,156)"/><polygon points="24.6,9.9 21.4,9.4 21.5,5.7 25.3,7.3" fill="rgb(177,177,177)"/><polygon points="10.3,32.9 12.4,31.7 11.4,34.4" fill="rgb(122,122,122)"/><polygon points="35.4,43.9 32.4,41.0 35.5,38.8 36.9,39.9 37.5,43.4" fill="rgb(150,150,150)"/><polygon points="6.6,37.5 7.7,38.7 6.9,39.9 4.8,39.3 4.7,37.8" fill="rgb(204,204,204)"/><polygon points="41.3,1.8 43.3,0.1 45.8,1.2 45.6,2.3 43.6,4.7" fill="rgb(186,186,186)"/><polygon points="40.6,12.6 42.6,10.9 44.8,14.0 44.7,15.7 41.6,15.4" fill="rgb(112,112,112)"/><polygon points="30.1,11.2 31.8,10.2 32.4,11.5 31.4,13.3 29.8,13.3" fill="rgb(128,128,128)"/><polygon points="51.0,39.3 50.8,42.2 50.0,44.7 47.2,42.2 46.9,40.2" fill="rgb(128,128,128)"/><polygon points="2.6,26.1 0.9,23.1 3.5,22.3" fill="rgb(197,197,197)"/><polygon points="34.0,35.0 39.0,35.3 35.9,38.4" fill="rgb(146,146,146)"/><polygon points="36.3,57.7 33.4,58.0 32.6,54.5 35.2,55.0" fill="rgb(197,197,197)"/><polygon points="47.8,36.3 48.1,33.9 49.7,32.8 50.8,34.4 50.5,36.9" fill="rgb(175,175,175)"/><polygon points="5.8,56.6 7.5,54.2 9.0,55.7 7.5,57.6" fill="rgb(183,183,183)"/><polygon points="19.0,42.9 21.5,43.5 21.0,46.5 18.2,45.9 17.6,43.6" fill="rgb(167,167,167)"/><polygon points="53.6,0.1 50.7,1.1 48.6,-1.6 49.7,-4.2 53.0,-2.4" fill="rgb(168,168,168)"/><polygon points="31.1,32.5 31.4,35.4 28.6,35.0" fill="rgb(141,141,141)"/><polygon points="49.8,16.8 51.4,18.7 49.0,19.8 45.6,19.0 47.0,15.2" fill="rgb(165,165,165)"/><polygon points="47.3,43.5 47.4,40.6 49.2,41.4 49.8,43.3" fill="rgb(140,140,140)"/><polygon points="58.5,26.6 57.7,28.6 56.5,29.3 55.4,28.2 55.7,26.0" fill="rgb(160,160,160)"/><polygon points="52.5,22.0 53.1,24.0 51.7,24.6 50.9,23.0" fill="rgb(85,85,85)"/><polygon points="47.4,15.8 46.6,18.1 43.5,16.0" fill="rgb(214,214,214)"/><polygon points="59.9,34.4 57.7,33.7 60.0,31.8" fill="rgb(134,134,134)"/><polygon points="37.1,38.3 39.1,39.9 35.7,40.6" fill="rgb(208,208,208)"/><polygon points="21.0,-0.4 23.4,0.5 23.5,3.2 20.8,2.9 19.6,-0.2" fill="rgb(188,188,188)"/><polygon points="57.0,0.4 59.9,1.7 58.8,3.6 57.4,4.1 54.9,2.5" fill="rgb(175,175,175)"/><polygon points="4.6,29.0 6.7,30.1 6.1,31.8 3.8,31.7" fill="rgb(192,192,192)"/><polygon points="46.7,13.6 45.8,11.9 48.1,12.6" fill="rgb(163,163,163)"/><polygon points="34.9,33.7 35.9,31.7 38.3,33.1 36.2,34.8" fill="rgb(120,120,120)"/><polygon points="3.1,43.6 7.2,41.9 6.0,45.7" fill="rgb(185,185,185)"/><polygon points="9.8,48.2 10.1,51.3 8.8,51.7 7.5,50.4 8.6,48.4" fill="rgb(209,209,209)"/><polygon points="52.7,51.8 50.3,51.0 50.8,49.6 53.4,49.7" fill="rgb(130,130,130)"/><polygon points="15.0,13.3 17.4,14.6 14.6,16.0" fill="rgb(199,199,199)"/><polygon points="33.8,9.0 36.4,6.4 38.7,8.4 38.8,10.9 35.2,11.4" fill="rgb(142,142,142)"/><polygon points="38.9,-1.4 41.4,0.1 39.2,1.6 37.6,0.9" fill="rgb(201,201,201)"/><polygon points="26.5,41.7 27.2,38.1 30.2,39.0 30.1,40.9 28.2,42.9" fill="rgb(121,121,121)"/><polygon points="58.7,36.0 57.2,39.0 55.2,35.8" fill="rgb(136,136,136)"/><polygon points="42.7,-2.6 40.4,-0.1 39.5,-2.9" fill="rgb(112,112,112)"/><polygon points="39.8,5.2 41.3,8.3 38.9,9.7 36.4,6.6" fill="rgb(157,157,157)"/><polygon points="27.2,32.8 24.8,33.8 23.1,32.7 24.7,31.7 26.2,31.6" fill="rgb(200,200,200)"/><polygon points="-3.0,52.2 -0.7,52.8 -0.1,54.5 -1.0,55.6 -3.7,55.8" fill="rgb(138,138,138)"/><polygon points="44.2,49.9 44.4,47.7 48.4,47.5 47.2,49.6" fill="rgb(111,111,111)"/><polygon points="57.7,28.3 55.3,29.7 54.1,26.8" fill="rgb(124,124,124)"/><polygon points="28.8,10.0 28.0,12.6 25.6,11.0" fill="rgb(171,171,171)"/><polygon points="-0.6,57.3 -2.3,57.2 -2.4,56.2 -1.5,55.0 0.3,56.6" fill="rgb(114,114,114)"/><polygon points="40.6,16.7 42.5,16.4 44.7,17.4 43.4,19.3 40.5,19.5" fill="rgb(203,203,203)"/><polygon points="32.1,24.2 33.0,21.9 34.5,22.3 35.3,24.5 34.1,25.5" fill="rgb(194,194,194)"/><polygon points="24.4,30.8 25.5,29.5 28.2,29.5 27.8,32.7 25.0,32.4" fill="rgb(209,209,209)"/><polygon points="19.8,9.6 21.0,6.2 22.7,6.8 24.7,10.5 21.7,10.4" fill="rgb(185,185,185)"/><polygon points="59.0,9.0 59.7,10.8 57.9,11.8 57.3,10.8 57.8,8.7" fill="rgb(136,136,136)"/><polygon points="21.3,17.4 20.1,19.9 18.3,16.3" fill="rgb(200,200,200)"/><polygon points="6.3,46.6 5.4,48.1 4.2,48.6 3.7,46.4 4.6,45.9" fill="rgb(181,181,181)"/><polygon points="50.5,45.9 52.7,46.8 50.8,47.8" fill="rgb(119,119,119)"/><polygon points="18.8,30.0 21.3,29.3 19.9,31.7" fill="rgb(170,170,170)"/><polygon points="34.3,17.6 33.8,19.1 32.8,19.0 32.9,17.4" fill="rgb(188,188,188)"/><polygon points="0.7,29.7 1.8,33.3 -2.8,32.6" fill="rgb(193,193,193)"/><polygon points="56.2,20.7 55.1,19.7 55.7,17.0 58.0,17.7 58.4,20.0" fill="rgb(101,101,101)"/><polygon points="-3.7,52.1 -2.3,50.0 -0.2,50.4 -0.4,52.8" fill="rgb(192,192,192)"/><polygon points="56.2,33.3 54.7,35.6 53.0,34.3 54.7,32.4" fill="rgb(121,121,121)"/><polygon points="35.4,13.4 36.4,11.2 37.5,12.7" fill="rgb(113,113,113)"/><polygon points="4.2,49.0 0.8,49.3 1.1,46.9 2.0,45.5 4.3,47.3" fill="rgb(148,148,148)"/><polygon points="50.0,47.7 49.5,46.5 49.9,45.2 52.2,46.0 51.8,47.2" fill="rgb(126,126,126)"/><polygon points="6.4,8.5 6.9,3.9 10.6,6.3" fill="rgb(194,194,194)"/><polygon points="35.8,45.4 36.6,49.2 34.1,48.6" fill="rgb(122,122,122)"/><polygon points="33.2,6.0 29.0,4.8 31.1,2.5 33.6,3.0" fill="rgb(203,203,203)"/><polygon points="4.5,8.7 8.8,6.6 8.7,11.3" fill="rgb(179,179,179)"/><polygon points="47.9,0.6 44.7,0.1 46.1,-2.4" fill="rgb(129,129,129)"/><polygon points="12.5,15.5 12.2,12.1 15.7,14.3" fill="rgb(115,115,115)"/><polygon points="49.0,14.0 49.6,16.8 47.6,16.2 47.1,13.6" fill="rgb(128,128,128)"/><polygon points="27.9,6.0 26.3,9.3 22.3,8.6 22.7,5.6 25.6,5.0" fill="rgb(191,191,191)"/><polygon points="56.8,-1.1 58.6,-1.1 58.7,0.2 57.0,1.0 56.7,-0.2" fill="rgb(158,158,158)"/><polygon points="-2.0,10.2 -0.1,10.7 -1.2,13.3 -2.7,14.1 -3.8,10.5" fill="rgb(122,122,122)"/><polygon points="15.4,3.0 14.3,3.2 13.3,2.9 13.4,1.5 14.9,0.9" fill="rgb(167,167,167)"/><polygon points="18.6,20.6 20.1,24.7 17.8,26.2 14.7,22.2" fill="rgb(192,192,192)"/><polygon points="6.9,50.4 4.8,51.8 2.3,50.8 2.7,48.0 7.0,48.0" fill="rgb(142,142,142)"/><polygon points="47.5,43.9 51.1,45.9 49.3,48.8 46.3,46.7" fill="rgb(198,198,198)"/><polygon points="51.0,25.1 53.2,24.2 55.2,26.6 54.7,28.5 52.0,27.8" fill="rgb(152,152,152)"/><polygon points="54.9,52.7 54.6,48.6 57.7,50.4" fill="rgb(213,213,213)"/><polygon points="17.9,38.6 16.5,40.2 15.3,38.2 16.6,37.0" fill="rgb(195,195,195)"/><polygon points="19.2,18.8 21.8,17.9 20.9,20.9" fill="rgb(165,165,165)"/><polygon points="4.4,38.8 0.4,36.9 4.6,34.8" fill="rgb(195,195,195)"/><polygon points="22.8,36.2 23.4,33.3 25.5,35.7" fill="rgb(147,147,147)"/><polygon points="1.0,24.6 2.2,23.5 4.5,25.1 2.5,26.7" fill="rgb(161,161,161)"/><polygon points="21.6,4.2 24.7,5.4 20.8,8.5" fill="rgb(134,134,134)"/><polygon points="50.6,33.6 49.5,34.0 48.9,32.1 50.0,31.6" fill="rgb(187,187,187)"/><polygon points="47.8,52.2 46.6,51.6 47.0,50.3 48.9,50.9" fill="rgb(206,206,206)"/><polygon points="2.0,14.8 3.5,17.3 -0.2,18.6 -1.0,15.0" fill="rgb(171,171,171)"/><polygon points="55.5,31.5 53.8,32.7 53.0,32.1 53.9,31.0" fill="rgb(151,151,151)"/><polygon points="55.3,27.0 52.0,25.8 56.9,23.5" fill="rgb(172,172,172)"/><polygon points="47.4,26.2 49.0,26.9 47.8,30.4 45.9,29.8 45.3,28.4" fill="rgb(156,156,156)"/><polygon points="54.0,39.1 53.3,41.4 52.2,38.6" fill="rgb(185,185,185)"/><polygon points="55.6,17.4 52.5,19.6 51.7,16.9" fill="rgb(146,146,146)"/><polygon points="25.5,43.8 25.3,41.4 27.1,40.8 28.0,41.8 27.7,44.0" fill="rgb(162,162,162)"/><polygon points="51.5,36.6 48.4,33.4 51.9,33.3" fill="rgb(142,142,142)"/><polygon points="20.2,57.3 17.1,55.8 19.6,53.1" fill="rgb(196,196,196)"/><polygon points="3.0,33.1 2.1,30.3 4.8,29.6 5.5,32.0 4.3,34.3" fill="rgb(160,160,160)"/><polygon points="0.8,39.1 -3.1,39.3 -2.7,35.8 -0.2,36.2" fill="rgb(152,152,152)"/><polygon points="22.3,10.6 19.7,11.3 19.4,9.3" fill="rgb(193,193,193)"/><polygon points="44.8,3.2 43.8,4.7 41.9,3.8 43.1,2.2" fill="rgb(137,137,137)"/><polygon points="1.5,17.4 3.8,17.9 2.2,20.1" fill="rgb(170,170,170)"/><polygon points="-0.8,45.2 0.5,45.2 1.1,46.4 -1.0,47.6 -1.3,46.0" fill="rgb(136,136,136)"/><polygon points="45.1,37.1 43.6,38.6 42.2,37.2 42.9,35.5 44.5,35.9" fill="rgb(183,183,183)"/><polygon points="23.9,46.5 27.2,44.4 27.6,48.0" fill="rgb(157,157,157)"/><polygon points="42.5,50.4 43.4,48.1 44.8,48.8 45.3,50.7 43.4,51.6" fill="rgb(129,129,129)"/><polygon points="38.9,48.1 39.3,49.8 36.5,50.6 36.3,49.0 37.3,47.9" fill="rgb(163,163,163)"/><polygon points="23.2,26.9 21.4,27.5 21.4,25.8 22.5,25.8" fill="rgb(174,174,174)"/><polygon points="57.6,19.6 58.1,20.8 55.8,21.5 54.6,19.8 55.9,19.3" fill="rgb(124,124,124)"/><polygon points="34.7,39.9 31.8,40.1 29.8,37.1 32.2,36.5 34.4,37.0" fill="rgb(199,199,199)"/><polygon points="43.5,41.1 40.9,41.6 38.0,39.7 39.4,38.3 42.6,37.6" fill="rgb(114,114,114)"/><polygon points="56.5,28.4 55.3,28.3 55.3,26.4 56.7,26.5" fill="rgb(98,98,98)"/><polygon points="21.9,55.5 24.8,55.2 26.3,57.9 23.8,59.2 21.1,58.6" fill="rgb(117,117,117)"/><polygon points="15.2,27.7 18.8,28.3 17.2,32.5" fill="rgb(162,162,162)"/><polygon points="21.3,40.1 20.9,38.4 24.1,38.2 23.7,41.2" fill="rgb(152,152,152)"/><polygon points="43.0,28.1 43.0,25.3 45.6,24.7 46.0,26.2 45.4,28.3" fill="rgb(148,148,148)"/><polygon points="36.0,17.4 34.7,23.2 31.6,18.5" fill="rgb(191,191,191)"/><polygon points="38.7,38.2 38.7,41.3 35.4,42.8 35.4,39.0" fill="rgb(138,138,138)"/><polygon points="8.3,38.8 12.4,37.6 12.0,41.6" fill="rgb(148,148,148)"/><polygon points="13.2,49.3 11.3,51.4 10.7,49.1" fill="rgb(204,204,204)"/><polygon points="53.2,39.6 54.4,41.3 52.7,44.5 50.6,41.9 51.7,40.1" fill="rgb(163,163,163)"/><polygon points="38.0,6.3 36.4,8.0 35.4,5.3" fill="rgb(190,190,190)"/><polygon points="29.2,13.8 29.4,10.8 32.4,10.7" fill="rgb(122,122,122)"/><polygon points="55.2,15.5 55.7,13.3 57.2,15.8" fill="rgb(139,139,139)"/><polygon points="38.3,32.2 38.2,33.9 37.3,35.2 35.1,34.1 35.6,31.7" fill="rgb(197,197,197)"/><polygon points="11.3,41.1 13.0,44.5 11.0,45.9 7.5,45.3" fill="rgb(196,196,196)"/><polygon points="19.7,9.6 17.1,7.4 20.8,6.3 21.2,8.0" fill="rgb(173,173,173)"/><polygon points="61.2,52.8 59.6,55.2 56.8,55.1 56.9,51.0" fill="rgb(197,197,197)"/><polygon points="25.9,43.3 23.4,43.6 22.8,41.8 26.1,41.9" fill="rgb(107,107,107)"/><polygon points="48.8,18.6 49.6,16.2 51.8,18.4 50.4,20.1" fill="rgb(167,167,167)"/><polygon points="34.0,34.3 35.3,37.4 33.2,39.5 31.4,35.7" fill="rgb(210,210,210)"/><polygon points="6.4,50.9 8.8,53.0 5.3,54.5" fill="rgb(146,146,146)"/><polygon points="54.8,10.3 53.3,11.4 52.4,9.5 53.9,9.5" fill="rgb(179,179,179)"/><polygon points="46.8,5.2 43.3,6.5 40.7,4.4 42.8,1.3 45.2,2.8" fill="rgb(212,212,212)"/><polygon points="35.4,31.7 38.4,34.8 34.4,35.6" fill="rgb(116,116,116)"/><polygon points="6.5,37.6 5.6,39.2 4.4,38.1 5.8,35.8" fill="rgb(173,173,173)"/><polygon points="18.1,16.1 17.9,17.0 15.2,17.2 15.3,15.2 17.1,14.0" fill="rgb(146,146,146)"/><polygon points="49.6,43.0 48.9,42.9 48.1,41.7 48.6,40.5 49.8,41.6" fill="rgb(156,156,156)"/><polygon points="8.9,53.1 9.7,56.2 8.2,57.7 6.3,56.3" fill="rgb(127,127,127)"/><polygon points="53.9,47.4 51.5,47.6 51.2,44.9" fill="rgb(183,183,183)"/><polygon points="38.5,11.1 39.8,11.2 39.6,14.3 38.3,15.9 36.6,12.3" fill="rgb(190,190,190)"/><polygon points="56.5,17.2 54.4,15.6 56.6,13.6 57.7,15.6" fill="rgb(154,154,154)"/><polygon points="2.2,43.8 1.9,40.1 4.3,43.0" fill="rgb(161,161,161)"/><polygon points="19.1,23.6 16.7,24.9 14.6,23.6 16.7,21.3" fill="rgb(172,172,172)"/><polygon points="36.7,50.7 35.2,49.5 36.3,48.7" fill="rgb(196,196,196)"/><polygon points="4.3,33.9 2.9,34.6 2.6,33.4 3.7,32.7" fill="rgb(213,213,213)"/><polygon points="5.5,11.7 7.7,13.7 4.0,16.0 1.8,13.6" fill="rgb(121,121,121)"/><polygon points="37.4,49.2 39.0,47.7 39.5,50.1" fill="rgb(164,164,164)"/><polygon points="0.2,9.4 1.1,8.6 3.3,9.6 1.5,11.6" fill="rgb(157,157,157)"/><polygon points="30.6,13.6 28.7,12.5 30.0,11.7 31.2,12.3" fill="rgb(118,118,118)"/><polygon points="3.1,57.7 6.9,56.8 5.7,59.3" fill="rgb(211,211,211)"/><polygon points="35.2,36.5 35.9,38.0 35.3,39.1 34.0,37.5" fill="rgb(152,152,152)"/><polygon points="56.6,48.1 58.2,48.4 58.3,50.2 56.7,50.6" fill="rgb(193,193,193)"/><polygon points="54.8,9.7 52.7,11.3 51.6,9.9 53.4,8.5" fill="rgb(128,128,128)"/><polygon points="46.8,-3.3 49.5,-3.4 49.8,-0.8 47.0,0.2" fill="rgb(138,138,138)"/><polygon points="8.3,22.5 9.2,23.8 7.6,25.2 7.4,23.4" fill="rgb(156,156,156)"/><polygon points="0.8,44.7 2.7,42.5 3.2,44.5" fill="rgb(213,213,213)"/><polygon points="41.0,22.4 38.2,21.4 38.3,19.5 39.6,18.8 41.6,20.5" fill="rgb(183,183,183)"/><polygon points="37.9,11.8 40.7,9.2 40.7,11.8" fill="rgb(119,119,119)"/><polygon points="31.0,23.6 29.6,22.9 30.2,21.9 31.4,21.4 32.1,22.3" fill="rgb(206,206,206)"/><polygon points="-0.3,33.1 2.1,30.4 5.6,32.9 3.8,35.7 2.0,36.2" fill="rgb(193,193,193)"/><polygon points="13.0,32.2 15.5,35.0 12.1,36.8 11.3,33.8" fill="rgb(188,188,188)"/><polygon points="42.5,13.6 42.9,15.3 40.9,14.1" fill="rgb(120,120,120)"/><polygon points="2.4,4.4 1.8,2.8 3.4,2.5 4.1,3.6" fill="rgb(183,183,183)"/><polygon points="56.3,7.7 55.8,4.0 57.8,4.2 59.1,7.6" fill="rgb(151,151,151)"/><polygon points="47.1,48.0 45.8,48.1 45.3,46.3 46.6,45.7 47.9,45.9" fill="rgb(118,118,118)"/><polygon points="42.7,26.7 45.3,28.0 43.9,30.7 41.4,28.8" fill="rgb(118,118,118)"/><polygon points="8.0,9.1 9.2,10.5 8.6,13.1 6.8,13.3 5.3,12.4" fill="rgb(161,161,161)"/><polygon points="-2.8,17.5 -0.6,14.8 1.0,16.3 1.7,19.0 -0.8,20.1" fill="rgb(178,178,178)"/><polygon points="52.4,23.5 54.4,22.1 56.5,21.5 56.7,23.7 54.2,26.2" fill="rgb(167,167,167)"/><polygon points="35.8,15.4 36.6,16.1 35.9,17.1 35.0,17.5 34.9,16.2" fill="rgb(190,190,190)"/><polygon points="34.9,21.5 36.0,22.5 34.3,23.8 33.1,23.0" fill="rgb(129,129,129)"/><polygon points="35.0,17.7 33.1,16.1 33.7,14.1 35.5,14.6 37.1,15.7" fill="rgb(159,159,159)"/><polygon points="7.7,42.8 10.0,43.1 7.7,44.5" fill="rgb(107,107,107)"/><polygon points="49.2,49.2 47.8,47.7 49.6,46.3 51.3,48.9" fill="rgb(195,195,195)"/><polygon points="47.5,56.0 48.9,60.5 44.9,59.4" fill="rgb(192,192,192)"/><polygon points="54.4,7.5 53.3,10.4 50.8,7.8" fill="rgb(171,171,171)"/><polygon points="45.4,52.1 44.7,49.5 46.1,49.8 46.7,52.1" fill="rgb(209,209,209)"/><polygon points="21.5,44.4 24.1,45.2 23.8,49.7 20.2,49.4" fill="rgb(143,143,143)"/><polygon points="28.5,25.8 24.8,23.7 26.2,21.0 28.8,21.3 29.2,23.8" fill="rgb(113,113,113)"/><polygon points="31.6,50.0 29.3,50.1 28.4,45.8 30.9,45.6" fill="rgb(176,176,176)"/><polygon points="14.9,17.8 18.1,16.3 18.1,20.2" fill="rgb(181,181,181)"/><polygon points="34.1,44.3 29.8,46.8 29.2,43.0 31.9,41.9" fill="rgb(114,114,114)"/><polygon points="6.5,24.3 8.4,24.2 7.3,25.6" fill="rgb(190,190,190)"/><polygon points="46.4,32.5 44.6,29.7 46.6,29.7" fill="rgb(156,156,156)"/><polygon points="50.3,23.4 50.5,25.6 47.6,24.2 48.2,22.0" fill="rgb(164,164,164)"/><polygon points="12.3,11.1 12.0,9.2 13.5,8.8 14.0,10.5" fill="rgb(208,208,208)"/><polygon points="25.8,55.9 27.9,54.0 28.6,56.6" fill="rgb(172,172,172)"/><polygon points="17.7,40.0 19.3,38.1 20.7,41.4" fill="rgb(193,193,193)"/><polygon points="36.2,6.0 38.1,6.2 36.9,9.5 34.6,9.0 34.0,6.3" fill="rgb(191,191,191)"/><polygon points="3.8,50.9 7.2,51.6 5.5,55.2" fill="rgb(125,125,125)"/><polygon points="19.7,22.1 17.5,23.7 15.8,22.3 18.2,19.6" fill="rgb(149,149,149)"/><polygon points="9.4,3.9 7.2,-0.2 11.5,2.0" fill="rgb(114,114,114)"/><polygon points="45.8,4.9 48.1,7.6 42.7,7.9" fill="rgb(124,124,124)"/><polygon points="6.7,-0.2 8.2,-1.3 9.8,1.1 8.3,2.4 6.5,1.1" fill="rgb(178,178,178)"/><polygon points="58.0,61.3 55.0,58.5 58.5,56.5" fill="rgb(208,208,208)"/><polygon points="44.8,32.3 48.5,33.0 45.4,34.8" fill="rgb(191,191,191)"/><polygon points="20.1,40.5 21.0,39.0 22.5,39.6 22.5,41.0 20.4,41.1" fill="rgb(160,160,160)"/><polygon points="10.5,56.9 10.9,58.7 9.9,59.8 8.7,59.2 8.7,57.6" fill="rgb(122,122,122)"/><polygon points="4.8,43.2 7.6,42.1 8.8,44.8 6.5,46.9" fill="rgb(133,133,133)"/><polygon points="42.9,36.8 43.9,38.1 42.2,38.8 41.5,36.9" fill="rgb(194,194,194)"/><polygon points="35.0,18.6 35.5,15.6 38.4,14.7 39.5,18.6 37.6,19.7" fill="rgb(196,196,196)"/><polygon points="0.2,28.7 -1.0,27.2 1.2,26.6" fill="rgb(187,187,187)"/><polygon points="10.7,27.0 9.7,29.8 8.1,28.4" fill="rgb(184,184,184)"/><polygon points="23.2,38.7 18.4,37.0 21.1,33.5" fill="rgb(138,138,138)"/><polygon points="31.3,5.0 29.2,6.9 28.2,5.0" fill="rgb(171,171,171)"/><polygon points="49.8,20.9 53.2,18.7 52.8,22.6" fill="rgb(125,125,125)"/><polygon points="35.2,29.2 38.5,29.7 37.9,33.7 36.3,34.4 33.5,32.9" fill="rgb(187,187,187)"/><polygon points="-1.8,30.6 -0.9,30.6 -0.3,31.8 -1.6,33.3 -3.1,32.5" fill="rgb(200,200,200)"/><polygon points="39.5,28.6 40.3,28.1 41.5,29.7 40.3,30.8 38.7,30.1" fill="rgb(193,193,193)"/><polygon points="60.7,-1.4 59.5,0.9 57.1,1.4 56.8,-2.4 59.8,-2.2" fill="rgb(174,174,174)"/><polygon points="42.6,32.9 40.6,32.1 42.6,30.4 44.0,31.7" fill="rgb(181,181,181)"/><polygon points="31.4,-0.3 30.2,-0.7 30.5,-2.4 32.1,-1.7" fill="rgb(135,135,135)"/><polygon points="58.1,59.9 56.7,59.1 56.9,57.3 57.9,57.8 58.3,58.9" fill="rgb(133,133,133)"/><polygon points="14.2,16.7 15.8,14.5 19.4,16.7 18.4,20.3 16.2,19.5" fill="rgb(213,213,213)"/><polygon points="42.6,8.0 45.7,9.0 43.4,11.1" fill="rgb(156,156,156)"/><polygon points="3.1,42.3 1.0,40.9 3.9,38.1 5.1,39.3" fill="rgb(166,166,166)"/><polygon points="29.9,27.2 30.0,28.4 27.9,28.5 27.3,28.1 28.6,26.8" fill="rgb(182,182,182)"/><polygon points="48.7,3.6 44.4,4.6 45.4,-0.0" fill="rgb(160,160,160)"/><polygon points="10.1,5.0 10.1,8.0 8.2,7.7 8.1,5.1" fill="rgb(172,172,172)"/><polygon points="61.2,15.1 61.7,19.1 58.5,19.4 56.3,17.9 57.3,15.6" fill="rgb(194,194,194)"/><polygon points="13.7,29.1 14.1,27.5 16.6,28.1 15.9,30.3" fill="rgb(182,182,182)"/><polygon points="32.3,13.3 32.9,17.4 29.1,16.3" fill="rgb(203,203,203)"/><polygon points="36.6,45.8 39.9,47.4 39.9,49.8 35.9,51.3" fill="rgb(138,138,138)"/><polygon points="18.6,24.8 20.6,25.6 20.2,29.2 16.7,28.7 16.7,26.4" fill="rgb(191,191,191)"/><polygon points="5.3,17.4 6.5,13.4 9.9,15.6" fill="rgb(157,157,157)"/><polygon points="27.2,61.3 29.2,56.7 31.1,59.2" fill="rgb(107,107,107)"/><polygon points="1.0,40.9 -1.6,41.0 -2.5,37.2 -0.1,37.1" fill="rgb(185,185,185)"/><polygon points="27.0,11.3 27.1,13.8 24.5,13.2 25.2,11.3" fill="rgb(213,213,213)"/><polygon points="45.3,15.9 46.9,12.0 49.7,13.3 48.1,17.4" fill="rgb(196,196,196)"/><polygon points="25.6,58.0 25.3,59.4 24.5,59.7 23.7,57.5" fill="rgb(203,203,203)"/><polygon points="7.9,30.6 6.0,28.8 9.0,27.3 10.5,29.3" fill="rgb(144,144,144)"/><polygon points="19.0,59.4 18.7,55.8 22.3,57.8" fill="rgb(192,192,192)"/><polygon points="30.8,18.2 31.8,21.1 29.5,20.7" fill="rgb(205,205,205)"/><polygon points="1.5,33.8 -0.9,33.5 -1.9,30.9 0.3,28.9 2.9,30.5" fill="rgb(210,210,210)"/><polygon points="35.5,8.1 33.8,6.7 34.3,4.9 35.8,5.1 37.1,6.7" fill="rgb(183,183,183)"/><polygon points="57.5,2.8 57.1,4.5 54.4,5.4 53.7,2.6 55.5,1.0" fill="rgb(149,149,149)"/><polygon points="48.4,9.6 52.0,9.4 51.8,11.7 48.6,12.3" fill="rgb(124,124,124)"/><polygon points="56.7,25.0 58.7,22.8 60.4,26.5 57.6,27.3" fill="rgb(139,139,139)"/><polygon points="19.9,49.9 18.6,45.8 22.8,46.4" fill="rgb(178,178,178)"/><polygon points="29.6,27.6 30.2,28.3 29.1,30.0 28.3,29.6 28.3,28.1" fill="rgb(192,192,192)"/><polygon points="42.1,21.3 39.8,18.5 44.1,19.2" fill="rgb(105,105,105)"/><polygon points="30.4,32.7 34.4,34.4 30.4,36.3" fill="rgb(148,148,148)"/><polygon points="49.0,8.6 49.0,6.8 51.4,7.7" fill="rgb(115,115,115)"/><polygon points="27.1,29.1 23.1,30.8 22.9,27.4" fill="rgb(194,194,194)"/><polygon points="9.5,18.7 8.2,20.6 8.1,18.3" fill="rgb(141,141,141)"/><polygon points="8.5,14.2 10.3,11.4 13.3,14.0 11.3,15.4" fill="rgb(201,201,201)"/><polygon points="6.2,42.7 1.6,39.9 5.9,39.0" fill="rgb(212,212,212)"/><polygon points="23.7,27.4 23.2,23.9 24.5,22.8 27.4,26.1" fill="rgb(140,140,140)"/><polygon points="41.7,53.2 38.4,54.0 38.8,51.7" fill="rgb(150,150,150)"/><polygon points="35.4,39.2 36.6,36.7 38.7,38.0" fill="rgb(200,200,200)"/><polygon points="45.7,38.4 48.1,40.0 45.8,40.7" fill="rgb(212,212,212)"/><polygon points="21.9,5.6 23.8,3.7 25.1,4.9 23.2,7.2" fill="rgb(198,198,198)"/><polygon points="49.9,32.0 49.9,35.3 47.8,35.7 46.8,32.0" fill="rgb(120,120,120)"/><polygon points="25.1,-1.1 25.1,1.4 21.9,1.1 22.7,-2.0" fill="rgb(128,128,128)"/><polygon points="-0.4,5.8 -0.0,7.9 -2.4,6.9" fill="rgb(142,142,142)"/><polygon points="30.2,58.7 31.1,57.1 33.4,55.8 34.0,57.9 32.8,59.1" fill="rgb(151,151,151)"/><polygon points="32.2,16.7 33.2,15.0 35.1,15.0 34.9,16.9 33.4,18.2" fill="rgb(167,167,167)"/><polygon points="55.6,11.2 58.3,12.9 56.8,15.2 53.6,14.7 53.4,11.5" fill="rgb(191,191,191)"/><polygon points="35.0,16.4 37.7,14.4 38.4,18.4" fill="rgb(203,203,203)"/><polygon points="39.3,41.6 41.7,42.2 41.5,44.8 39.2,43.9" fill="rgb(184,184,184)"/><polygon points="33.2,7.6 33.3,10.3 30.8,9.0 31.3,7.5" fill="rgb(110,110,110)"/><polygon points="26.2,48.6 29.5,51.2 26.2,52.0" fill="rgb(130,130,130)"/><polygon points="20.9,-4.4 23.2,-0.9 20.5,1.1 18.5,-1.7" fill="rgb(165,165,165)"/><polygon points="12.3,-0.5 12.2,3.5 9.1,0.3" fill="rgb(140,140,140)"/><polygon points="52.9,27.9 50.9,25.6 54.0,24.7" fill="rgb(98,98,98)"/><polygon points="54.2,22.2 53.6,20.8 54.6,19.4 55.8,20.6" fill="rgb(149,149,149)"/><polygon points="35.5,46.2 36.7,46.0 37.1,47.7 35.3,48.7 34.2,48.2" fill="rgb(108,108,108)"/><polygon points="-0.2,0.3 0.4,-2.6 3.0,-2.0 4.6,-0.3 3.0,2.5" fill="rgb(137,137,137)"/><polygon points="36.6,58.0 34.7,60.5 33.6,58.9 34.8,57.8" fill="rgb(129,129,129)"/><polygon points="55.2,36.3 56.9,34.4 57.3,37.7" fill="rgb(137,137,137)"/><polygon points="44.8,28.1 42.3,29.6 40.1,25.1 42.8,24.2" fill="rgb(198,198,198)"/><polygon points="44.2,37.1 42.5,35.8 43.6,34.3 45.7,34.4 45.6,36.0" fill="rgb(135,135,135)"/><polygon points="40.9,54.5 42.3,55.1 41.5,56.6 39.7,55.9" fill="rgb(213,213,213)"/><polygon points="45.0,36.7 43.5,34.9 45.9,34.5" fill="rgb(181,181,181)"/><polygon points="15.0,24.9 15.6,30.9 12.7,28.3" fill="rgb(199,199,199)"/><polygon points="39.2,33.8 41.1,32.4 42.2,34.0 40.9,34.2" fill="rgb(156,156,156)"/><polygon points="38.6,47.9 36.6,51.3 33.9,50.0 36.1,45.6" fill="rgb(143,143,143)"/><polygon points="35.3,19.7 36.9,20.0 36.4,21.1 35.3,22.2 33.9,20.8" fill="rgb(115,115,115)"/><polygon points="20.5,50.4 19.3,52.7 18.5,51.2" fill="rgb(131,131,131)"/><polygon points="-0.1,17.3 1.0,18.7 0.3,20.0 -1.7,19.4" fill="rgb(177,177,177)"/><polygon points="14.6,52.1 13.7,50.7 15.8,48.8 17.1,51.3" fill="rgb(190,190,190)"/><polygon points="25.7,57.4 25.9,59.6 23.5,59.4 23.1,57.8" fill="rgb(182,182,182)"/><polygon points="16.7,48.4 17.6,47.0 19.1,48.0 18.5,49.5 17.0,50.3" fill="rgb(128,128,128)"/><polygon points="25.8,21.4 27.6,22.3 27.6,24.1 25.3,24.3 25.4,22.7" fill="rgb(164,164,164)"/><polygon points="28.7,31.9 31.1,32.2 30.9,35.6 28.4,34.6" fill="rgb(136,136,136)"/><polygon points="57.8,31.1 58.7,33.0 56.5,32.5" fill="rgb(139,139,139)"/><polygon points="2.7,2.7 -0.3,3.8 -1.2,2.7 -0.1,0.6 1.6,0.4" fill="rgb(190,190,190)"/><polygon points="25.8,13.9 23.6,11.8 25.5,10.7" fill="rgb(130,130,130)"/><polygon points="9.3,59.6 7.6,58.5 8.5,56.4 11.0,55.8 11.5,58.0" fill="rgb(164,164,164)"/><polygon points="8.7,34.9 11.6,34.2 13.2,36.8 10.5,38.7" fill="rgb(190,190,190)"/><polygon points="8.6,46.8 11.1,43.9 12.1,46.7" fill="rgb(188,188,188)"/><polygon points="43.9,48.5 42.9,44.5 45.6,46.4" fill="rgb(192,192,192)"/><polygon points="6.6,22.2 8.5,23.0 7.3,25.2 5.7,22.8" fill="rgb(194,194,194)"/><polygon points="14.7,58.8 11.7,54.7 15.6,53.7" fill="rgb(146,146,146)"/><polygon points="30.1,56.8 28.8,57.2 28.4,55.3 30.0,55.1" fill="rgb(206,206,206)"/><polygon points="47.4,31.2 46.9,33.7 45.1,33.3 44.9,31.0" fill="rgb(184,184,184)"/><polygon points="49.4,19.7 50.8,19.5 51.5,20.6 50.9,21.6 49.7,21.2" fill="rgb(170,170,170)"/><polygon points="7.2,18.9 8.4,20.4 7.3,22.3 5.3,21.8 5.5,20.7" fill="rgb(209,209,209)"/><polygon points="12.9,46.1 10.1,45.6 11.8,42.7" fill="rgb(169,169,169)"/><polygon points="27.1,46.4 28.2,47.5 26.8,48.8 25.7,47.8 25.8,46.2" fill="rgb(107,107,107)"/><polygon points="30.5,26.0 32.1,28.7 31.2,29.4 27.1,28.2 28.4,26.9" fill="rgb(145,145,145)"/><polygon points="25.5,22.6 25.3,17.8 30.5,19.4 29.9,21.9" fill="rgb(136,136,136)"/><polygon points="5.0,28.5 7.2,27.5 7.2,31.4" fill="rgb(214,214,214)"/></svg></div>
<div class="sw" style="left:21px;top:590px;background:#dfe2df"></div>
<div class="sw" style="left:91px;top:590px;background:#ddd8bb"></div>
<div class="sw" style="left:161px;top:590px;background:#c8c29e"></div>
<div class="sw" style="left:231px;top:590px;background:#d9c291"></div>
<div class="sw" style="left:301px;top:590px;background:#e6e2c5"></div>
<div class="hr" style="left:21px;top:535px;width:337px"></div>
<svg class="ic" style="left:381px;top:604px" width="4" height="5"><polygon points="0,0 4,0 2,4" fill="#a3a3a3"/></svg>
<div class="t" style="left:21px;top:556px;font-size:13.9px;color:#4a5262">Metal Roofing: <span style="color:#9ea4ad">Charcoal Gray</span></div>
</div>
</body></html>
